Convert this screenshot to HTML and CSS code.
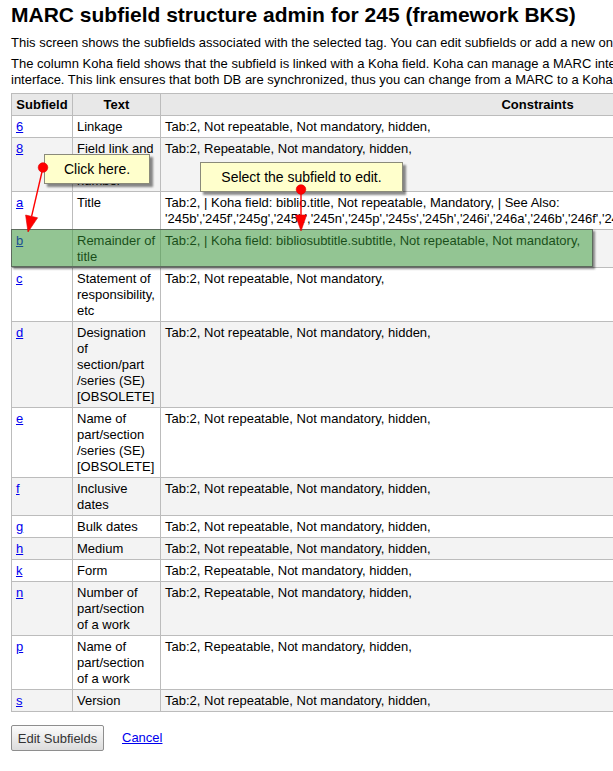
FILE: index.html
```html
<!DOCTYPE html>
<html lang="en">
<head>
<meta charset="utf-8">
<title>MARC subfield structure admin for 245</title>
<link rel="stylesheet" href="styles.css">
</head>
<body>
<div class="page">
  <h1 class="title">MARC subfield structure admin for 245 (framework BKS)</h1>
  <p class="intro first">This screen shows the subfields associated with the selected tag. You can edit subfields or add a new one by clicking on edit.</p>
  <p class="intro second">The column Koha field shows that the subfield is linked with a Koha field. Koha can manage a MARC interface, and a Koha<br>interface. This link ensures that both DB are synchronized, thus you can change from a MARC to a Koha interface easily.</p>

  <div class="table-wrap">
    <table class="subfields">
      <colgroup>
        <col class="c-sub">
        <col class="c-text">
        <col class="c-con">
      </colgroup>
      <thead>
        <tr><th>Subfield</th><th>Text</th><th>Constraints</th></tr>
      </thead>
      <tbody>
        <tr><td><a href="#">6</a></td><td class="txt">Linkage</td><td>Tab:2, Not repeatable, Not mandatory, hidden,</td></tr>
        <tr><td><a href="#">8</a></td><td class="txt">Field link and<br>sequence<br>number</td><td>Tab:2, Repeatable, Not mandatory, hidden,</td></tr>
        <tr><td><a href="#">a</a></td><td class="txt">Title</td><td>Tab:2, | Koha field: biblio.title, Not repeatable, Mandatory, | See Also:<br><span class="nw">'245b','245f','245g','245k','245n','245p','245s','245h','246i','246a','246b','246f','246g','246h','246n','246p','247a','247b','247f','247g'</span></td></tr>
        <tr><td><a href="#">b</a></td><td class="txt">Remainder of<br>title</td><td>Tab:2, | Koha field: bibliosubtitle.subtitle, Not repeatable, Not mandatory,</td></tr>
        <tr><td><a href="#">c</a></td><td class="txt">Statement of<br>responsibility,<br>etc</td><td>Tab:2, Not repeatable, Not mandatory,</td></tr>
        <tr><td><a href="#">d</a></td><td class="txt">Designation<br>of<br>section/part<br>/series (SE)<br>[OBSOLETE]</td><td>Tab:2, Not repeatable, Not mandatory, hidden,</td></tr>
        <tr><td><a href="#">e</a></td><td class="txt">Name of<br>part/section<br>/series (SE)<br>[OBSOLETE]</td><td>Tab:2, Not repeatable, Not mandatory, hidden,</td></tr>
        <tr><td><a href="#">f</a></td><td class="txt">Inclusive<br>dates</td><td>Tab:2, Not repeatable, Not mandatory, hidden,</td></tr>
        <tr><td><a href="#">g</a></td><td class="txt">Bulk dates</td><td>Tab:2, Not repeatable, Not mandatory, hidden,</td></tr>
        <tr><td><a href="#">h</a></td><td class="txt">Medium</td><td>Tab:2, Not repeatable, Not mandatory, hidden,</td></tr>
        <tr><td><a href="#">k</a></td><td class="txt">Form</td><td>Tab:2, Repeatable, Not mandatory, hidden,</td></tr>
        <tr><td><a href="#">n</a></td><td class="txt">Number of<br>part/section<br>of a work</td><td>Tab:2, Repeatable, Not mandatory, hidden,</td></tr>
        <tr><td><a href="#">p</a></td><td class="txt">Name of<br>part/section<br>of a work</td><td>Tab:2, Repeatable, Not mandatory, hidden,</td></tr>
        <tr><td><a href="#">s</a></td><td class="txt">Version</td><td>Tab:2, Not repeatable, Not mandatory, hidden,</td></tr>
      </tbody>
    </table>
    <div class="highlight"></div>
  </div>

  <div class="actions">
    <button class="btn" type="button">Edit Subfields</button>
    <a class="cancel" href="#">Cancel</a>
  </div>
</div>

<div class="tip tip-click">Click here.</div>
<div class="tip tip-select">Select the subfield to edit.</div>

<svg class="arrows" width="613" height="771" viewBox="0 0 613 771" xmlns="http://www.w3.org/2000/svg">
  <line x1="43" y1="167.5" x2="31.6" y2="216.4" stroke="#f00" stroke-width="1.4"/>
  <polygon points="28,232 37.6,217.8 25.6,215" fill="#f00" stroke="#d00" stroke-width="0.6"/>
  <circle cx="43" cy="167.5" r="4.8" fill="#f00" stroke="#d00" stroke-width="0.6"/>
  <line x1="301" y1="189.5" x2="301" y2="215" stroke="#f00" stroke-width="1.4"/>
  <polygon points="301,231 295.4,215 306.6,215" fill="#f00" stroke="#d00" stroke-width="0.6"/>
  <circle cx="301" cy="189.5" r="4.8" fill="#f00" stroke="#d00" stroke-width="0.6"/>
</svg>
</body>
</html>
```

FILE: styles.css
```css
html {
  overflow: hidden;
}

body {
  margin: 0;
  position: relative;
  width: 613px;
  height: 771px;
  font-family: "Liberation Sans", Arial, sans-serif;
  font-size: 13px;
  line-height: 16px;
  color: #000;
  background: #fff;
}

.page {
  padding: 3px 0 0 11px;
}

.title {
  margin: 0;
  font-size: 21px;
  line-height: 24px;
  font-weight: bold;
  white-space: nowrap;
}

.intro {
  margin: 0;
  white-space: nowrap;
}

.intro.first {
  margin-top: 8px;
}

.intro.second {
  margin-top: 5px;
}

.table-wrap {
  position: relative;
  margin-top: 5px;
  width: 903px;
}

.subfields {
  border-collapse: collapse;
  table-layout: fixed;
  width: 903px;
}

.c-sub { width: 61px; }
.c-text { width: 88px; }
.c-con { width: 754px; }

.subfields th,
.subfields td {
  border: 1px solid #bcbcbc;
  padding: 3px 4px 2px;
  vertical-align: top;
  text-align: left;
  overflow: hidden;
}

.subfields th {
  background: #e8e8e8;
  font-weight: bold;
  text-align: center;
}

.subfields tbody tr:nth-child(even) td {
  background: #f3f3f3;
}

.subfields tbody tr:nth-child(odd) td {
  background: #fff;
}

.subfields a {
  color: #0000ee;
}

.txt,
.nw {
  white-space: nowrap;
}

.highlight {
  position: absolute;
  left: 0;
  top: 136px;
  width: 582px;
  height: 38px;
  box-sizing: border-box;
  background: rgba(51, 151, 51, 0.5);
  border: 1px solid #5d6b5d;
  box-shadow: 2px 2px 2px rgba(0, 0, 0, 0.45);
}

.actions {
  display: flex;
  align-items: center;
  gap: 18px;
  margin-top: 13px;
}

.btn {
  box-sizing: border-box;
  width: 93px;
  height: 26px;
  padding: 0;
  font-family: "Liberation Sans", Arial, sans-serif;
  font-size: 13px;
  color: #333;
  background: linear-gradient(#fbfbfb, #dcdcdc);
  border: 1px solid #8e8e8e;
  border-radius: 2px;
}

.cancel {
  color: #0000ee;
}

.tip {
  position: absolute;
  box-sizing: border-box;
  height: 30px;
  line-height: 28px;
  font-size: 14px;
  text-align: center;
  white-space: nowrap;
  background: #ffffcc;
  border: 1px solid #8a8a7a;
  box-shadow: 3px 3px 2px rgba(0, 0, 0, 0.45);
}

.tip-click {
  left: 44px;
  top: 154px;
  width: 106px;
}

.tip-select {
  left: 200px;
  top: 162px;
  width: 203px;
}

.arrows {
  position: absolute;
  left: 0;
  top: 0;
  pointer-events: none;
}
```
